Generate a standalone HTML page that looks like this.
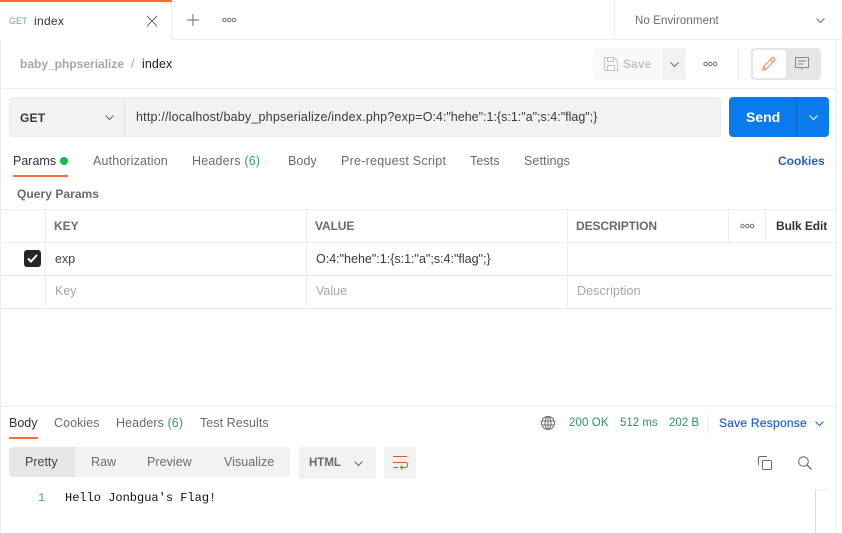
<!DOCTYPE html>
<html><head><meta charset="utf-8">
<style>
html,body{margin:0;padding:0;background:#fff}
body{width:842px;height:533px;position:relative;overflow:hidden;font-family:"Liberation Sans",sans-serif;font-size:12.5px;color:#6b6b6b}
.t{position:absolute;white-space:nowrap;line-height:16px;height:16px}
.r{position:absolute;background:#ededed}
svg{position:absolute;overflow:visible;fill:none}
.b{font-weight:bold;font-size:12px}
</style></head><body>
<!-- top tab strip -->
<div class="r" style="left:0;top:0;width:172px;height:2px;background:#ff6c37"></div>
<div class="r" style="left:171px;top:2px;width:1px;height:38px"></div>
<div class="r" style="left:172px;top:39px;width:670px;height:1px"></div>
<div class="r" style="left:614px;top:0;width:1px;height:39px"></div>
<div class="t" style="left:9px;top:13px;font-size:9px;color:#6fae84">GET</div>
<div class="t" style="left:34px;top:13px;color:#333;font-size:12px;letter-spacing:.3px">index</div>
<svg style="left:146px;top:15px" width="12" height="12"><path d="M1 1L11 11M11 1L1 11" stroke="#6b6b6b" stroke-width="1"/></svg>
<svg style="left:187px;top:14px" width="12" height="12"><path d="M6 0V12M0 6H12" stroke="#808080" stroke-width="1.2"/></svg>
<svg style="left:222px;top:17px" width="15" height="6"><circle cx="2.5" cy="3" r="1.7" stroke="#707070"/><circle cx="7.3" cy="3" r="1.7" stroke="#707070"/><circle cx="12.1" cy="3" r="1.7" stroke="#707070"/></svg>
<div class="t" style="left:635px;top:13px;font-size:11.5px;color:#6b6b6b;letter-spacing:.1px">No Environment</div>
<svg style="left:816px;top:18px" width="9" height="5"><path d="M.5 .5L4.5 4.5L8.5 .5" stroke="#6b6b6b"/></svg>

<!-- left & right frame -->
<div class="r" style="left:0;top:40px;width:1px;height:493px"></div>
<div class="r" style="left:836px;top:40px;width:1px;height:493px"></div>

<!-- breadcrumb row -->
<div class="t b" style="left:20px;top:56px;color:#a6a6a6">baby_phpserialize</div>
<div class="t" style="left:131px;top:56px;color:#a6a6a6">/</div>
<div class="t" style="left:142px;top:56px;color:#212121;letter-spacing:.1px">index</div>
<div class="r" style="left:593px;top:48px;width:68px;height:32px;background:#f9f9f9;border-radius:3px 0 0 3px"></div>
<div class="r" style="left:662px;top:48px;width:24px;height:32px;background:#f2f2f2;border-radius:0 3px 3px 0"></div>
<svg style="left:604px;top:57px" width="14" height="14"><path d="M.5 .5H10L13.5 4V13.5H.5ZM3.5 .5V4.5H9.5V.5M3.5 13.5V8.5H10.5V13.5" stroke="#c4c4c4"/></svg>
<div class="t b" style="left:623px;top:56px;color:#c4c4c4;letter-spacing:.1px">Save</div>
<svg style="left:670px;top:62px" width="9" height="5"><path d="M.5 .5L4.5 4.5L8.5 .5" stroke="#6b6b6b"/></svg>
<svg style="left:703px;top:61px" width="15" height="6"><circle cx="2.5" cy="3" r="1.7" stroke="#707070"/><circle cx="7.3" cy="3" r="1.7" stroke="#707070"/><circle cx="12.1" cy="3" r="1.7" stroke="#707070"/></svg>
<div class="r" style="left:738px;top:48px;width:1px;height:32px"></div>
<div class="r" style="left:751px;top:48px;width:70px;height:32px;background:#e6e6e6;border-radius:4px"></div>
<div class="r" style="left:753px;top:50px;width:33px;height:28px;background:#fff;border-radius:3px"></div>
<svg style="left:762px;top:57px" width="14" height="14" viewBox="0 0 16 16"><path d="M.8 15.2L1.8 11L11.5 1.2Q12.6 .2 14 1.4Q15.4 2.8 14.3 4L4.8 14ZM1.8 11L4.8 14M10 3L13 6" stroke="#f4875a" stroke-width="1.2"/></svg>
<svg style="left:795px;top:57px" width="14" height="14"><path d="M.5 .5H13.5V10.5H8L7 12L6 10.5H.5ZM3 4H11M3 7H8" stroke="#8a8a8a"/></svg>
<div class="r" style="left:0;top:88px;width:836px;height:1px"></div>

<!-- url bar -->
<div class="r" style="left:9px;top:97px;width:712px;height:40px;background:#f2f2f2;border:0;border-radius:3px;box-shadow:inset 0 0 0 1px #ebebeb"></div>
<div class="r" style="left:124px;top:98px;width:1px;height:38px;background:#e6e6e6"></div>
<div class="t b" style="left:20px;top:110px;color:#3a3a3a;letter-spacing:.2px">GET</div>
<svg style="left:105px;top:115px" width="9" height="5"><path d="M.5 .5L4.5 4.5L8.5 .5" stroke="#6b6b6b"/></svg>
<div class="t" style="left:136px;top:109px;color:#3a3a3a;letter-spacing:.2px">http://localhost/baby_phpserialize/index.php?exp=<span style="letter-spacing:0">O:4:"hehe":1:{s:1:"a";s:4:"flag";}</span></div>
<div class="r" style="left:729px;top:97px;width:100px;height:40px;background:#097bed;border-radius:4px"></div>
<div class="r" style="left:796px;top:97px;width:1px;height:40px;background:#0768c9"></div>
<div class="t b" style="left:746px;top:109px;font-size:14px;color:#fff">Send</div>
<svg style="left:809px;top:115px" width="9" height="5"><path d="M.5 .5L4.5 4.5L8.5 .5" stroke="#fff"/></svg>

<!-- request tabs -->
<div class="t" style="left:13px;top:153px;color:#333">Params</div>
<div class="r" style="left:60px;top:157px;width:8px;height:8px;border-radius:50%;background:#0cbb52"></div>
<div class="r" style="left:13px;top:175px;width:55px;height:2px;background:#ff6c37"></div>
<div class="t" style="left:93px;top:153px;letter-spacing:.15px">Authorization</div>
<div class="t" style="left:192px;top:153px;letter-spacing:.2px">Headers <span style="color:#2f9e7c">(6)</span></div>
<div class="t" style="left:288px;top:153px;letter-spacing:.1px">Body</div>
<div class="t" style="left:341px;top:153px;letter-spacing:.25px">Pre-request Script</div>
<div class="t" style="left:470px;top:153px;letter-spacing:.1px">Tests</div>
<div class="t" style="left:524px;top:153px;letter-spacing:.1px">Settings</div>
<div class="t b" style="left:778px;top:153px;color:#1f5fd0">Cookies</div>

<!-- params -->
<div class="t b" style="left:17px;top:186px;color:#6b6b6b;letter-spacing:.05px">Query Params</div>
<div class="r" style="left:0;top:209px;width:836px;height:1px"></div>
<div class="r" style="left:0;top:242px;width:836px;height:1px"></div>
<div class="r" style="left:0;top:275px;width:836px;height:1px"></div>
<div class="r" style="left:0;top:308px;width:836px;height:1px"></div>
<div class="r" style="left:45px;top:209px;width:1px;height:100px"></div>
<div class="r" style="left:306px;top:209px;width:1px;height:100px"></div>
<div class="r" style="left:567px;top:209px;width:1px;height:100px"></div>
<div class="r" style="left:728px;top:209px;width:1px;height:33px"></div>
<div class="r" style="left:765px;top:209px;width:1px;height:33px"></div>
<div class="t b" style="left:54px;top:218px;color:#6b6b6b">KEY</div>
<div class="t b" style="left:315px;top:218px;color:#6b6b6b;letter-spacing:-.1px">VALUE</div>
<div class="t b" style="left:576px;top:218px;color:#6b6b6b;letter-spacing:-.1px">DESCRIPTION</div>
<svg style="left:740px;top:223px" width="15" height="6"><circle cx="2.5" cy="3" r="1.7" stroke="#707070"/><circle cx="7.3" cy="3" r="1.7" stroke="#707070"/><circle cx="12.1" cy="3" r="1.7" stroke="#707070"/></svg>
<div class="t b" style="left:776px;top:218px;color:#333;letter-spacing:-.1px">Bulk Edit</div>
<div class="r" style="left:24px;top:250px;width:17px;height:17px;background:#262626;border-radius:3px"></div>
<svg style="left:27px;top:254px" width="11" height="9"><path d="M1 4.5L4 7.5L10 1" stroke="#fff" stroke-width="2"/></svg>
<div class="t" style="left:55px;top:251px;color:#444">exp</div>
<div class="t" style="left:316px;top:251px;color:#3a3a3a">O:4:"hehe":1:{s:1:"a";s:4:"flag";}</div>
<div class="t" style="left:55px;top:283px;color:#a6a6a6">Key</div>
<div class="t" style="left:316px;top:283px;color:#a6a6a6">Value</div>
<div class="t" style="left:577px;top:283px;color:#a6a6a6;letter-spacing:.1px">Description</div>

<!-- response -->
<div class="r" style="left:0;top:406px;width:836px;height:1px"></div>
<div class="t" style="left:9px;top:415px;color:#333">Body</div>
<div class="r" style="left:9px;top:437px;width:29px;height:2px;background:#ff6c37"></div>
<div class="t" style="left:54px;top:415px;letter-spacing:.05px">Cookies</div>
<div class="t" style="left:116px;top:415px;letter-spacing:.1px">Headers <span style="color:#2f9e7c">(6)</span></div>
<div class="t" style="left:200px;top:415px;letter-spacing:.05px">Test Results</div>
<svg style="left:541px;top:416px" width="14" height="14" stroke="#6b6b6b"><circle cx="7" cy="7" r="6.5"/><ellipse cx="7" cy="7" rx="3" ry="6.5"/><path d="M.5 5H13.5M.5 9H13.5M7 .5V13.5"/></svg>
<div class="t" style="left:569px;top:415px;font-size:11.5px;color:#2c9263;letter-spacing:.1px">200 OK</div>
<div class="t" style="left:620px;top:415px;font-size:11.5px;color:#2c9263">512 ms</div>
<div class="t" style="left:669px;top:415px;font-size:11.5px;color:#2c9263">202 B</div>
<div class="r" style="left:708px;top:413px;width:1px;height:20px"></div>
<div class="t" style="left:719px;top:415px;color:#1f5fd0;font-size:12px;-webkit-text-stroke:.2px #1f5fd0;letter-spacing:.25px">Save Response</div>
<svg style="left:815px;top:421px" width="9" height="5"><path d="M.5 .5L4.5 4.5L8.5 .5" stroke="#1f5fd0"/></svg>

<div class="r" style="left:9px;top:447px;width:281px;height:30px;background:#f2f2f2;border-radius:4px"></div>
<div class="r" style="left:9px;top:447px;width:66px;height:30px;background:#e6e6e6;border-radius:4px 0 0 4px"></div>
<div class="t" style="left:25px;top:454px;color:#444">Pretty</div>
<div class="t" style="left:91px;top:454px;letter-spacing:.05px">Raw</div>
<div class="t" style="left:147px;top:454px;letter-spacing:.05px">Preview</div>
<div class="t" style="left:224px;top:454px;letter-spacing:.05px">Visualize</div>
<div class="r" style="left:298px;top:447px;width:78px;height:32px;background:#f2f2f2;border-radius:4px"></div>
<div class="t b" style="left:309px;top:455px;font-size:11.5px;color:#6b6b6b">HTML</div>
<svg style="left:354px;top:461px" width="9" height="5"><path d="M.5 .5L4.5 4.5L8.5 .5" stroke="#6b6b6b"/></svg>
<div class="r" style="left:384px;top:447px;width:32px;height:32px;background:#f2f2f2;border-radius:4px"></div>
<svg style="left:393px;top:456px" width="15" height="14"><path d="M0 .5H14M0 6.5H12.5Q14.5 6.5 14.5 9Q14.5 11.5 12 11.5H7.5M9.5 9.5L7.5 11.5L9.5 13.5M0 11.5H5" stroke="#d9572b"/></svg>
<svg style="left:758px;top:456px" width="14" height="14"><rect x="4.5" y="4.5" width="9" height="9" rx="1" stroke="#6b6b6b"/><path d="M.5 9V2Q.5 .5 2 .5H9" stroke="#6b6b6b"/></svg>
<svg style="left:798px;top:456px" width="14" height="14"><circle cx="5.5" cy="5.5" r="4.8" stroke="#6b6b6b"/><path d="M9 9L13.5 13.5" stroke="#6b6b6b" stroke-width="1.3"/></svg>

<div class="t" style="left:38px;top:490px;color:#4a9bb5;font-family:'Liberation Mono',monospace;font-size:12px">1</div>
<div class="t" style="left:65px;top:490px;color:#111;font-family:'Liberation Mono',monospace;font-size:12px">Hello Jonbgua's Flag!</div>
<div class="r" style="left:815px;top:489px;width:1px;height:44px;background:#dcdcdc"></div>
<div class="r" style="left:815px;top:489px;width:14px;height:1px;background:#ededed"></div>
</body></html>
